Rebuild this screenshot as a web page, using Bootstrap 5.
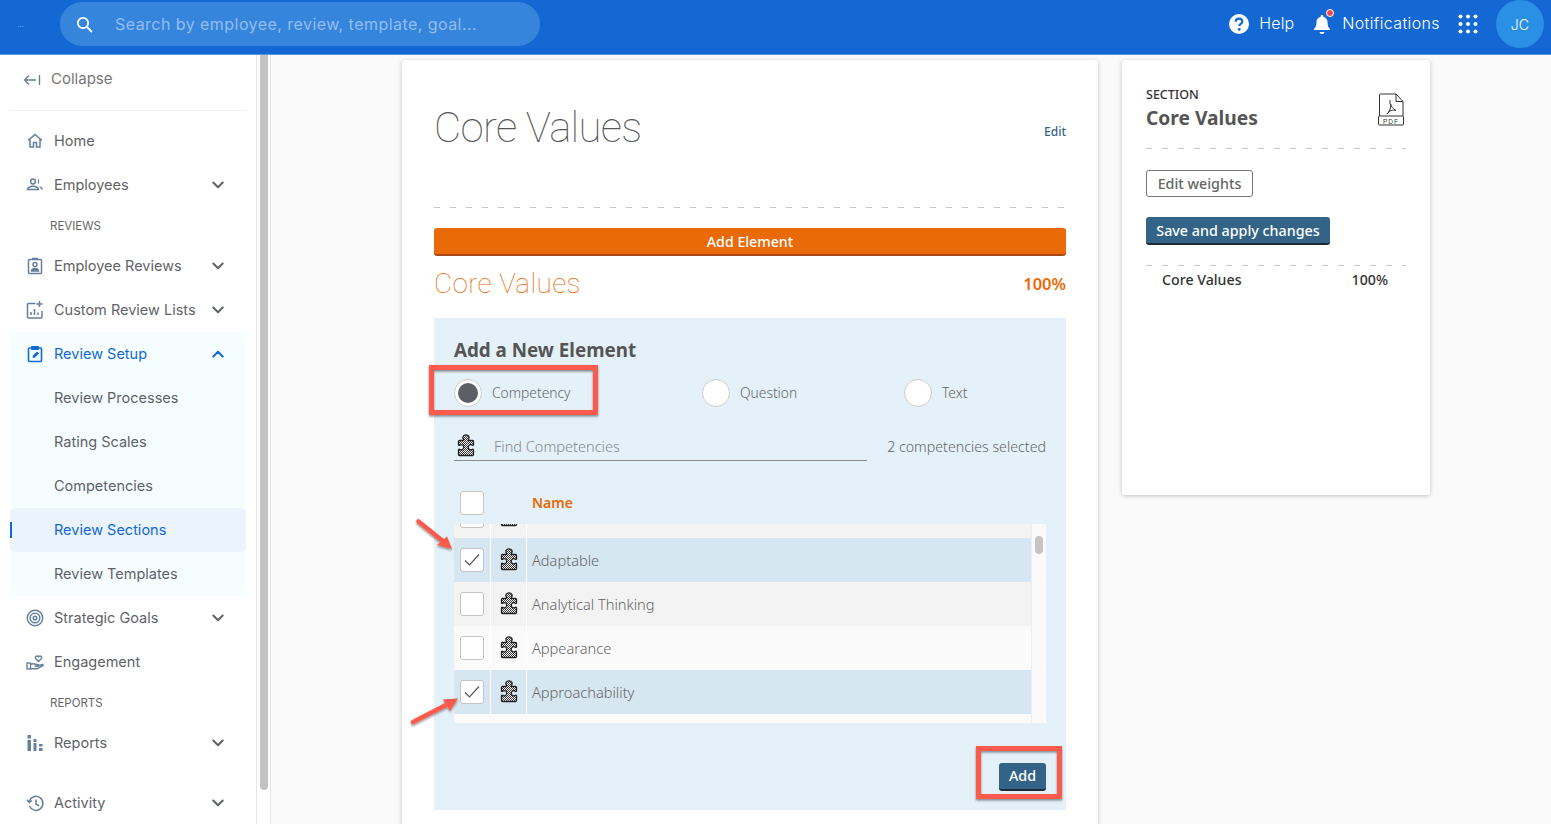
<!DOCTYPE html>
<html lang="en">

<head>
    <meta charset="UTF-8">
    <meta name="viewport" content="width=device-width, initial-scale=1.0">
    <title>Core Values</title>
    <link rel="stylesheet" href="https://cdn.jsdelivr.net/npm/bootstrap@5.3.2/dist/css/bootstrap.min.css">
    <style>
        html, body { height: 100%; overflow: hidden; }
        body { background: #fafafa; font-family: "Noto Sans", "Open Sans", sans-serif; color: #555; position: relative; }

        /* top bar */
        .top-bar { height: 55px; background: #1368d3; border-bottom: 1px solid #5b95dd; font-family: Inter, sans-serif; color: #fff; }
        .top-dots { width: 60px; height: 48px; padding-left: 17px; font-size: 8px; color: #7fb0ea; line-height: 1; }
        .search-pill { width: 480px; height: 44px; margin-top: 2px; background: #3585dc; border-radius: 22px; padding-left: 16px; gap: 22px; color: #93bdf0; font-size: 16px; letter-spacing: .45px; }
        .top-link { font-size: 16px; font-weight: 300; letter-spacing: .1px; }
        .top-text { padding-bottom: 2px; }
        .top-notes { letter-spacing: .37px; }
        .bell-wrap { margin: 0 11px 0 19px; }
        .help-icon { margin-right: 10px; }
        .dots-icon { margin-left: 18px; }
        .bell-dot { position: absolute; top: -5px; right: -3px; width: 8px; height: 8px; border-radius: 50%; background: #f0484e; border: 1px solid #fff; }
        .avatar { width: 48px; height: 48px; margin: 0 7px 0 18px; border-radius: 50%; background: #2a90e6; font-size: 14px; font-weight: 300; }

        /* side menu */
        .side-menu { width: 257px; height: 769px; flex: none; background: #fff; border-right: 1px solid #e6e6e6; font-family: Inter, sans-serif; font-size: 14.5px; color: #5f6368; padding: 0 10px; }
        .collapse-row { height: 56px; padding: 0 0 6px 13px; gap: 10px; border-bottom: 1px solid #f3f3f3; margin-bottom: 8px; color: #777; font-size: 15px; }
        .menu-item { height: 44px; padding: 0 22px 0 16px; border-radius: 6px; }
        .menu-item .mi-icon { width: 18px; height: 20px; margin-right: 10px; flex: none; color: #66809a; }
        .menu-item .mi-chev { margin-left: auto; }
        .menu-item.sub { padding-left: 44px; }
        .menu-head { height: 37px; padding: 3px 0 0 40px; font-size: 11.5px; color: #666; }
        .menu-group { background: #f5fdff; border-radius: 6px; }
        .menu-blue { color: #1368d3; }
        .menu-blue .mi-icon { color: #1368d3; }
        .menu-active { background: #ebf3fc; position: relative; }
        .menu-active::before { content: ""; position: absolute; left: 0; top: 14px; width: 2px; height: 16px; background: #1368d3; }
        .menu-gap { height: 16px; }
        .page-scroll { width: 14px; height: 769px; flex: none; background: #fff; border-right: 1px solid #e6e6e6; padding: 0 3px; }
        .page-scroll div { height: 735px; width: 8px; background: #c3c3c3; border-radius: 0 0 4px 4px; }

        /* cards */
        .work-area { padding: 5px 0 0 131px; gap: 24px; }
        .sheet { background: #fff; box-shadow: 0 1px 4px rgba(0, 0, 0, .22); border-radius: 3px; }
        .main-sheet { width: 696px; height: 790px; padding: 0 32px; }
        .side-sheet { width: 308px; height: 435px; padding: 24px 24px 0; color: #333; }
        .dash-line { background: repeating-linear-gradient(90deg, #c8c8c8 0 6px, transparent 6px 16px) left bottom / 100% 1px no-repeat; }
        .big-title { height: 148px; margin-bottom: 20px; padding-top: 44px; }
        .big-title h1 { font-family: Roboto, sans-serif; font-weight: 100; font-size: 42px; line-height: 48px; margin: 0; color: #555; letter-spacing: -.7px; }
        .edit-link { font-size: 12px; font-weight: 500; color: #336487; margin-top: 19px; }
        .add-element { height: 28px; background: #e96a07; border: 0; border-bottom: 2px solid #a9481a; border-radius: 3px; color: #fff; font-size: 14.2px; font-weight: 500; padding: 0; line-height: 28px; width: 100%; }
        .sec-line { height: 62px; padding-bottom: 6px; color: #e96a07; }
        .sec-line h2 { font-family: Roboto, sans-serif; font-weight: 100; font-size: 28px; margin: 0; letter-spacing: .3px; }
        .sec-line span { font-size: 16.5px; font-weight: 600; }

        /* add element panel */
        .add-panel { height: 492px; background: #e4f1f8; padding: 20px 20px 0; }
        .add-panel h3 { font-size: 18.8px; font-weight: 700; color: #555; margin: 0; line-height: 24px; }
        .radio-row { height: 69px; padding-top: 17px; font-size: 13.8px; font-weight: 300; color: #666; }
        .radio-item { gap: 10px; }
        .rad-a { width: 248px; }
        .rad-b { width: 202px; }
        .round { width: 28px; height: 28px; border-radius: 50%; background: #fff; border: 1px solid #ccc; padding: 3px; }
        .round i { display: block; width: 20px; height: 20px; border-radius: 50%; background: #5d5f66; }
        .find-row { height: 30px; }
        .find-box { width: 413px; height: 30px; padding-left: 3px; border-bottom: 1px solid #8b8b8b; gap: 19px; font-size: 14.5px; font-weight: 300; color: #888; }
        .find-box span { padding-top: 2px; }
        .find-note { font-size: 14.2px; font-weight: 300; color: #666; padding-top: 2px; }
        .list-head { height: 77px; padding: 30px 0 0 6px; font-size: 14px; font-weight: 600; color: #e96a07; }
        .list-head b { margin-left: 48px; font-weight: 600; line-height: 24px; }
        .tick-box { width: 24px; height: 24px; background: #fff; border: 1px solid #c4c4c4; border-radius: 3px; flex: none; }
        .comp-list { height: 199px; width: 592px; overflow: hidden; background: #fafafa; margin-top: -14px; }
        .comp-rows { width: 577px; margin-top: -30px; border-right: 1px solid #eee; }
        .comp-row { height: 44px; font-size: 14.6px; font-weight: 300; color: #666; }
        .comp-row > div { height: 100%; }
        .cell-a { width: 37px; padding-left: 6px; border-right: 1px solid #fff; }
        .cell-b { width: 36px; padding-left: 9px; border-right: 1px solid #fff; }
        .cell-c { padding: 2px 0 0 5px; }
        .row-on { background: #d7e7f1; }
        .row-grey { background: #f3f3f3; }
        .row-end { height: 14px; }
        .fake-scroll { width: 14px; }
        .fake-scroll div { width: 8px; height: 18px; margin: 12px 0 0 3px; background: #c5c5c5; border-radius: 4px; }
        .add-btn-row { padding-top: 40px; }
        .blue-btn { background: #336487; border: 0; border-bottom: 2px solid #1e2a35; border-radius: 3px; color: #fff; font-size: 14.3px; font-weight: 500; padding: 0; }
        .add-btn { width: 47px; height: 28px; }

        /* right card */
        .sec-label { font-size: 12.5px; font-weight: 500; line-height: 16px; color: #333; }
        .sec-name { font-size: 19.2px; font-weight: 700; color: #555; line-height: 30px; }
        .side-head { height: 65px; margin-bottom: 21px; padding-top: 3px; }
        .pdf-mark { margin: 6px 2px 0 0; }
        .weights-btn { width: 107px; height: 27px; background: #fff; border: 1px solid #777; border-radius: 3px; color: #666; font-size: 14.3px; font-weight: 500; padding: 0; }
        .save-btn { width: 184px; height: 28px; margin-top: 20px; padding-top: 2px; }
        .weight-line { margin-top: 20px; padding: 4px 18px 0 16px; font-size: 14.2px; font-weight: 500; color: #333; background-position: left top; }

        /* annotations */
        .marks { position: absolute; left: 0; top: 0; pointer-events: none; }
    </style>
</head>

<body>
    <svg width="0" height="0" class="position-absolute">
        <defs>
            <pattern id="dither" width="2" height="2" patternUnits="userSpaceOnUse">
                <rect width="2" height="2" fill="#fff" />
                <rect width="1" height="1" fill="#333" />
                <rect x="1" y="1" width="1" height="1" fill="#333" />
            </pattern>
            <symbol id="puzzle" viewBox="0 0 18 24">
                <path d="M2.500 6.500h3.600c.7 0 .8-.6.4-1.200C5.800 4.300 5.700 3.300 6.200 2.300 6.800 1.200 7.800.9 9 .9s2.200.3 2.800 1.400c.5 1 .4 2-.3 3-.4.6-.3 1.200.4 1.200h3.600c.7 0 1 .4 1 1v3.200c0 .7-.5.9-1.100.5-1-.6-2-.7-2.900-.2-.9.6-1.300 1.400-1.300 2.300s.4 1.700 1.300 2.300c.9.5 1.900.4 2.900-.2.600-.4 1.100-.2 1.100.5v4.600c0 .6-.3 1-1 1H2.500c-.7 0-1-.4-1-1v-4.600c0-.7.5-.9 1.100-.5 1 .6 2 .7 2.900.2.900-.6 1.300-1.400 1.300-2.300s-.4-1.700-1.300-2.300c-.9-.5-1.900-.4-2.900.2-.6.4-1.100.2-1.100-.5V7.500c0-.6.3-1 1-1z" fill="url(#dither)" stroke="#222" stroke-width="1.300" />
            </symbol>
            <symbol id="chev-down" viewBox="0 0 12 8">
                <path d="M1.300 1.500 6 6.200l4.700-4.700" fill="none" stroke="currentColor" stroke-width="2" stroke-linecap="round" stroke-linejoin="round" />
            </symbol>
            <symbol id="chev-up" viewBox="0 0 12 8">
                <path d="M1.300 6.500 6 1.800l4.700 4.700" fill="none" stroke="currentColor" stroke-width="2" stroke-linecap="round" stroke-linejoin="round" />
            </symbol>
        </defs>
    </svg>

    <header class="top-bar d-flex align-items-start">
        <div class="top-dots d-flex align-items-center">...</div>
        <div class="search-pill d-flex align-items-center">
            <svg width="17" height="17" viewBox="0 0 17 17" fill="none" stroke="#fff" stroke-width="1.800" stroke-linecap="round"><circle cx="7" cy="7" r="5.200" /><path d="m11 11 4.500 4.500" /></svg>
            <span>Search by employee, review, template, goal...</span>
        </div>
        <div class="ms-auto d-flex align-items-center top-link">
            <svg class="help-icon" width="20" height="20" viewBox="0 0 20 20"><circle cx="10" cy="10" r="10" fill="#fff" /><path d="M6.800 7.800c0-1.900 1.400-3.100 3.300-3.100s3.200 1.100 3.200 2.700c0 2.400-3 2.400-3 4.700" fill="none" stroke="#1368d3" stroke-width="2.200" /><circle cx="10.200" cy="15.300" r="1.400" fill="#1368d3" /></svg>
            <span class="top-text">Help</span>
            <span class="bell-wrap position-relative d-inline-flex">
                <svg width="18" height="21" viewBox="0 0 18 21"><path d="M9 1c.8 0 1.300.5 1.300 1.300v.5c2.700.6 4.300 2.900 4.300 5.700 0 3.200.8 5 2.400 6.500v1H1v-1c1.600-1.500 2.400-3.300 2.400-6.500 0-2.800 1.600-5.100 4.300-5.700v-.5C7.700 1.500 8.200 1 9 1z" fill="#fff" /><path d="M6.500 18h5a2.500 2 0 0 1-5 0z" fill="#fff" /></svg>
                <i class="bell-dot"></i>
            </span>
            <span class="top-text top-notes">Notifications</span>
            <svg class="dots-icon" width="20" height="20" viewBox="0 0 20 20" fill="#fff"><circle cx="2.500" cy="2.500" r="2" /><circle cx="10" cy="2.500" r="2" /><circle cx="17.500" cy="2.500" r="2" /><circle cx="2.500" cy="10" r="2" /><circle cx="10" cy="10" r="2" /><circle cx="17.500" cy="10" r="2" /><circle cx="2.500" cy="17.500" r="2" /><circle cx="10" cy="17.500" r="2" /><circle cx="17.500" cy="17.500" r="2" /></svg>
            <div class="avatar d-flex align-items-center justify-content-center">JC</div>
        </div>
    </header>

    <div class="d-flex">
        <nav class="side-menu">
            <div class="collapse-row d-flex align-items-center">
                <svg width="18" height="12" viewBox="0 0 18 12" fill="none" stroke="#66809a" stroke-width="1.400"><path d="M16.500 1v10M13 6H1.500M6 1.500 1.500 6 6 10.500" /></svg>
                <span>Collapse</span>
            </div>
            <div class="menu-item d-flex align-items-center">
                <svg class="mi-icon" viewBox="0 0 18 20" fill="none" stroke="currentColor" stroke-width="1.500"><path d="M2 9.500 9 3.500l7 6M4 8.500V16h3.500v-4.500h3V16H14V8.500" /></svg>
                Home
            </div>
            <div class="menu-item d-flex align-items-center">
                <svg class="mi-icon" viewBox="0 0 18 20" fill="currentColor"><circle cx="7" cy="6.500" r="2.400" fill="none" stroke="currentColor" stroke-width="1.500" /><path d="M12 4c1.600.3 1.600 4.700 0 5z" /><path d="M1.500 14.500c.5-2.400 2.900-3.300 5.500-3.300s5 .9 5.500 3.300H1.500z" fill="none" stroke="currentColor" stroke-width="1.500" /><path d="M13 11c2 .3 3.500 1.400 4 3.500h-2c-.2-1.300-1-2.600-2-3.500z" /></svg>
                Employees
                <svg class="mi-chev" width="12" height="8"><use href="#chev-down" /></svg>
            </div>
            <div class="menu-head d-flex align-items-center">REVIEWS</div>
            <div class="menu-item d-flex align-items-center">
                <svg class="mi-icon" viewBox="0 0 18 20" fill="none" stroke="currentColor" stroke-width="1.500"><rect x="2.500" y="3.500" width="13" height="14" rx="1" /><path d="M6 2.500h6" /><circle cx="9" cy="8.500" r="2" /><path d="M5.500 15c.3-1.800 1.700-2.500 3.500-2.500s3.200.7 3.500 2.500z" fill="currentColor" /></svg>
                Employee Reviews
                <svg class="mi-chev" width="12" height="8"><use href="#chev-down" /></svg>
            </div>
            <div class="menu-item d-flex align-items-center">
                <svg class="mi-icon" viewBox="0 0 18 20" fill="none" stroke="currentColor" stroke-width="1.500"><path d="M9.500 3.500H2.500a1 1 0 0 0-1 1V17a1 1 0 0 0 1 1H15a1 1 0 0 0 1-1v-6M13.500 1v6M10.500 4h6M5 15v-3M8.500 15V9M12 15v-2.500" /></svg>
                Custom Review Lists
                <svg class="mi-chev" width="12" height="8"><use href="#chev-down" /></svg>
            </div>
            <div class="menu-group">
                <div class="menu-item menu-blue d-flex align-items-center">
                    <svg class="mi-icon" viewBox="0 0 18 20" fill="none" stroke="currentColor" stroke-width="1.600"><rect x="2.500" y="4" width="13" height="13.500" rx="1" /><path d="M6 2.800h6v2.400H6z" fill="currentColor" /><path d="m6.500 14 .5-2.500 4-4 2 2-4 4z" fill="currentColor" stroke="none" /></svg>
                    Review Setup
                    <svg class="mi-chev" width="12" height="8"><use href="#chev-up" /></svg>
                </div>
                <div class="menu-item sub d-flex align-items-center">Review Processes</div>
                <div class="menu-item sub d-flex align-items-center">Rating Scales</div>
                <div class="menu-item sub d-flex align-items-center">Competencies</div>
                <div class="menu-item sub menu-blue menu-active d-flex align-items-center">Review Sections</div>
                <div class="menu-item sub d-flex align-items-center">Review Templates</div>
            </div>
            <div class="menu-item d-flex align-items-center">
                <svg class="mi-icon" viewBox="0 0 18 20" fill="none" stroke="currentColor" stroke-width="1.500"><circle cx="9" cy="10" r="7.700" /><circle cx="9" cy="10" r="4.800" /><circle cx="9" cy="10" r="1.800" /></svg>
                Strategic Goals
                <svg class="mi-chev" width="12" height="8"><use href="#chev-down" /></svg>
            </div>
            <div class="menu-item d-flex align-items-center">
                <svg class="mi-icon" viewBox="0 0 18 20" fill="none" stroke="currentColor" stroke-width="1.400"><rect x="1" y="11" width="3.500" height="6" /><path d="M4.500 12.500c2-1.300 3.500-1 5.500 0h2c.9 0 .9 1.800 0 1.800H8.500M12 14l4-1.500c1.200-.3 1.500 1 .6 1.500L11 16.800H4.500" /><path d="M12.500 9.500 9.800 6.700c-1.500-1.700.9-3.800 2.700-2 1.800-1.800 4.200.3 2.700 2z" /></svg>
                Engagement
            </div>
            <div class="menu-head d-flex align-items-center">REPORTS</div>
            <div class="menu-item d-flex align-items-center">
                <svg class="mi-icon" viewBox="0 0 18 20" fill="currentColor"><rect x="1.500" y="2" width="3.500" height="3.500" /><rect x="1.500" y="7" width="3.500" height="11" /><rect x="7.500" y="6" width="3" height="3" /><rect x="7.500" y="10" width="3" height="8" /><rect x="13" y="11" width="3.500" height="2.500" /><rect x="13" y="15" width="3.500" height="3" /></svg>
                Reports
                <svg class="mi-chev" width="12" height="8"><use href="#chev-down" /></svg>
            </div>
            <div class="menu-gap"></div>
            <div class="menu-item d-flex align-items-center">
                <svg class="mi-icon" viewBox="0 0 18 20" fill="none" stroke="currentColor" stroke-width="1.500"><path d="M3.300 8A7 7 0 1 1 3.400 13M1 6.800 3.200 9.500 6 7.500M10 6.500V11l3 1.800" /></svg>
                Activity
                <svg class="mi-chev" width="12" height="8"><use href="#chev-down" /></svg>
            </div>
        </nav>
        <div class="page-scroll"><div></div></div>

        <main class="work-area d-flex align-items-start">
            <section class="sheet main-sheet">
                <div class="big-title dash-line d-flex justify-content-between align-items-start">
                    <h1>Core Values</h1>
                    <a class="edit-link text-decoration-none">Edit</a>
                </div>
                <button class="add-element">Add Element</button>
                <div class="sec-line d-flex justify-content-between align-items-center">
                    <h2>Core Values</h2>
                    <span>100%</span>
                </div>
                <div class="add-panel">
                    <h3>Add a New Element</h3>
                    <div class="radio-row d-flex align-items-start">
                        <label class="radio-item rad-a d-flex align-items-center"><span class="round"><i></i></span>Competency</label>
                        <label class="radio-item rad-b d-flex align-items-center"><span class="round"></span>Question</label>
                        <label class="radio-item d-flex align-items-center"><span class="round"></span>Text</label>
                    </div>
                    <div class="find-row d-flex justify-content-between align-items-center">
                        <div class="find-box d-flex align-items-center">
                            <svg width="18" height="24"><use href="#puzzle" /></svg>
                            <span>Find Competencies</span>
                        </div>
                        <span class="find-note">2 competencies selected</span>
                    </div>
                    <div class="list-head d-flex align-items-start">
                        <span class="tick-box"></span>
                        <b>Name</b>
                    </div>
                    <div class="comp-list d-flex">
                        <div class="comp-rows flex-grow-1">
                            <div class="comp-row row-grey d-flex align-items-center">
                                <div class="cell-a d-flex align-items-center"><span class="tick-box"></span></div>
                                <div class="cell-b d-flex align-items-center"><svg width="18" height="24"><use href="#puzzle" /></svg></div>
                                <div class="cell-c"></div>
                            </div>
                            <div class="comp-row row-on d-flex align-items-center">
                                <div class="cell-a d-flex align-items-center"><span class="tick-box d-flex align-items-center justify-content-center"><svg width="16" height="14" viewBox="0 0 16 14" fill="none" stroke="#555" stroke-width="1.200"><path d="m1 7.500 4.500 4.500L15 1.500" /></svg></span></div>
                                <div class="cell-b d-flex align-items-center"><svg width="18" height="24"><use href="#puzzle" /></svg></div>
                                <div class="cell-c d-flex align-items-center">Adaptable</div>
                            </div>
                            <div class="comp-row row-grey d-flex align-items-center">
                                <div class="cell-a d-flex align-items-center"><span class="tick-box"></span></div>
                                <div class="cell-b d-flex align-items-center"><svg width="18" height="24"><use href="#puzzle" /></svg></div>
                                <div class="cell-c d-flex align-items-center">Analytical Thinking</div>
                            </div>
                            <div class="comp-row d-flex align-items-center">
                                <div class="cell-a d-flex align-items-center"><span class="tick-box"></span></div>
                                <div class="cell-b d-flex align-items-center"><svg width="18" height="24"><use href="#puzzle" /></svg></div>
                                <div class="cell-c d-flex align-items-center">Appearance</div>
                            </div>
                            <div class="comp-row row-on d-flex align-items-center">
                                <div class="cell-a d-flex align-items-center"><span class="tick-box d-flex align-items-center justify-content-center"><svg width="16" height="14" viewBox="0 0 16 14" fill="none" stroke="#555" stroke-width="1.200"><path d="m1 7.500 4.500 4.500L15 1.500" /></svg></span></div>
                                <div class="cell-b d-flex align-items-center"><svg width="18" height="24"><use href="#puzzle" /></svg></div>
                                <div class="cell-c d-flex align-items-center">Approachability</div>
                            </div>
                            <div class="comp-row row-end d-flex">
                                <div class="cell-a"></div>
                                <div class="cell-b"></div>
                            </div>
                        </div>
                        <div class="fake-scroll"><div></div></div>
                    </div>
                    <div class="add-btn-row d-flex justify-content-end">
                        <button class="blue-btn add-btn">Add</button>
                    </div>
                </div>
            </section>

            <aside class="sheet side-sheet">
                <div class="side-head dash-line d-flex justify-content-between align-items-start">
                    <div>
                        <div class="sec-label">SECTION</div>
                        <div class="sec-name">Core Values</div>
                    </div>
                    <svg class="pdf-mark" width="26" height="33" viewBox="0 0 26 33" fill="none" stroke="#333" stroke-width="1"><path d="M1.500 23V2a1 1 0 0 1 1-1H18l7 7.500V23" /><path d="M18 1v7.500h7" /><rect x=".5" y="23" width="25" height="9" rx="1" /><path d="M12 7v3c0 2 3 6 6 7.500-3-.8-7-.3-9 3.500 2-1.500 4-6 4-10" /><text x="13" y="30.500" font-size="6.500" text-anchor="middle" fill="#333" stroke="none" font-family="Liberation Sans" letter-spacing="1">PDF</text></svg>
                </div>
                <button class="weights-btn d-block">Edit weights</button>
                <button class="blue-btn save-btn d-block">Save and apply changes</button>
                <div class="weight-line dash-line d-flex justify-content-between">
                    <span>Core Values</span>
                    <span>100%</span>
                </div>
            </aside>
        </main>
    </div>

    <svg class="marks" width="1551" height="824">
        <defs>
            <filter id="markShadow" x="-10%" y="-10%" width="120%" height="130%">
                <feDropShadow dx="0" dy="1.500" stdDeviation="1" flood-color="#000" flood-opacity=".45" />
            </filter>
        </defs>
        <g filter="url(#markShadow)">
            <rect x="431.500" y="367.500" width="164" height="45" fill="none" stroke="#fb5a4e" stroke-width="5" />
            <rect x="978.500" y="748.500" width="81" height="48" fill="none" stroke="#fb5a4e" stroke-width="5" />
            <path d="M418.500 521.500 444 542" stroke="#fb5a4e" stroke-width="4.500" stroke-linecap="round" fill="none" />
            <path d="M452 549 437 545 447 536.500z" fill="#fb5a4e" />
            <path d="M413 722 447 704.500" stroke="#fb5a4e" stroke-width="4.500" stroke-linecap="round" fill="none" />
            <path d="M458 698.500 443 699.500 450 711z" fill="#fb5a4e" />
        </g>
    </svg>

    <script src="https://cdn.jsdelivr.net/npm/bootstrap@5.3.2/dist/js/bootstrap.bundle.min.js"></script>
</body>

</html>
